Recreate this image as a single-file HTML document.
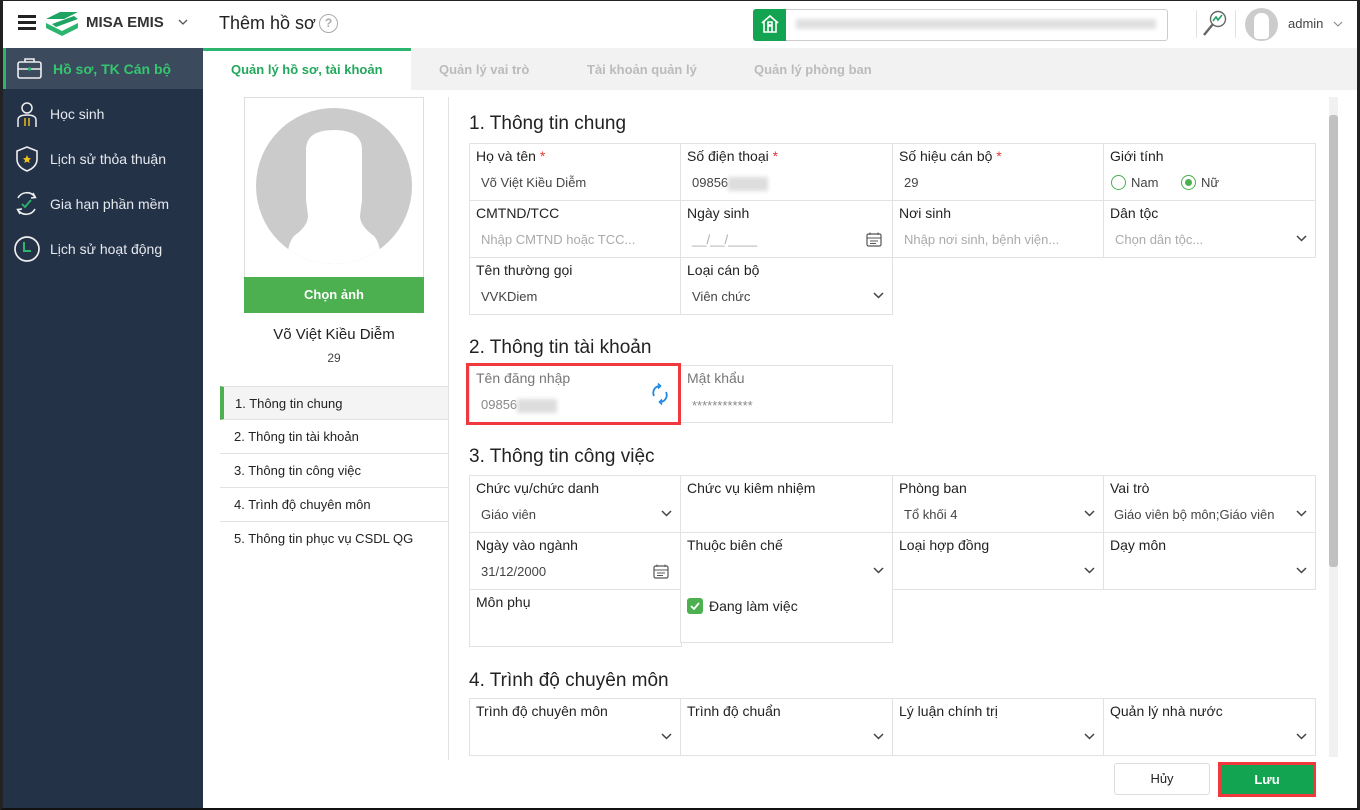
<!DOCTYPE html>
<html><head><meta charset="utf-8"><style>
*{margin:0;padding:0;box-sizing:border-box}
body{width:1360px;height:810px;overflow:hidden;background:#fff;font-family:"Liberation Sans","DejaVu Sans",sans-serif;position:relative;color:#222}
.a{position:absolute}
.c{position:absolute;border:1px solid #e2e2e2;background:#fff}
.l{position:absolute;left:6px;top:4px;font-size:14px;color:#222;white-space:nowrap}
.v{position:absolute;left:11px;top:31px;font-size:13px;color:#444;white-space:nowrap}
.p{color:#aaa}
.s{color:#e53935}
.ch{position:absolute;right:8px;top:34px}
.h{position:absolute;left:469px;font-size:19px;color:#222}
.side{position:absolute;left:18px;font-size:14px;color:#e6e9ee}
.nav{position:absolute;left:220px;width:228px;height:34px;border-bottom:1px solid #e2e2e2;font-size:13px;padding:9px 0 0 14px;color:#222}
.tab{position:absolute;top:62px;font-size:13px;color:#bbb;font-weight:bold}
.blur{display:inline-block;background:#ddd;filter:blur(2px);vertical-align:middle}
</style></head><body>
<div class="a" style="left:0;top:0;width:1360px;height:810px;border:1px solid #222;border-left:3px solid #222;border-right:3px solid #222;border-bottom:2px solid #111;z-index:20;pointer-events:none"></div>

<div class="a" style="left:18px;top:15px;width:18px;height:3px;background:#222;box-shadow:0 6px 0 #222,0 12px 0 #222"></div>
<svg class="a" style="left:44px;top:10px" width="36" height="27" viewBox="0 0 36 27"><path d="M2 9 L16 2 L34 2 L20 9 Z" fill="#1ea362"/><path d="M8 14 L30 6 L34 9 L12 17 Z" fill="#1ea362"/><path d="M2 13 L18 21 L34 13 L34 18 L18 26 L2 18 Z" fill="#2bb56f"/></svg>
<div class="a" style="left:86px;top:14px;font-size:15px;font-weight:bold;color:#333">MISA EMIS</div>
<svg class="a" style="left:178px;top:19px" width="10" height="6"><path d="M1 1 L5 5 L9 1" stroke="#555" fill="none" stroke-width="1.3"/></svg>
<div class="a" style="left:219px;top:13px;font-size:18px;color:#222">Thêm hồ sơ</div>
<div class="a" style="left:319px;top:14px;width:19px;height:19px;border:1.5px solid #aaa;border-radius:50%;font-size:12px;color:#aaa;text-align:center;line-height:16px;font-weight:bold">?</div>
<div class="a" style="left:753px;top:9px;width:415px;height:32px;border:1px solid #ccc;border-radius:3px"></div>
<div class="a" style="left:753px;top:9px;width:33px;height:32px;background:#13a452;border-radius:3px 0 0 3px"></div>
<svg class="a" style="left:760px;top:14px" width="20" height="20" viewBox="0 0 20 20"><path d="M2 9 L10 2 L18 9 M4 8 V18 H16 V8 M8 18 V12 H12 V18 M8 8 H12 V11 H8Z" stroke="#fff" fill="none" stroke-width="1.6"/></svg>
<div class="a blur" style="left:796px;top:19px;width:360px;height:10px;background:#e0e0e0"></div>
<div class="a" style="left:1196px;top:10px;width:1px;height:28px;background:#e2e2e2"></div>
<svg class="a" style="left:1201px;top:8px" width="28" height="30" viewBox="0 0 28 30"><circle cx="17" cy="11" r="7.5" stroke="#666" fill="none" stroke-width="1.4"/><path d="M12 16 L3 27" stroke="#666" stroke-width="2.4"/><path d="M12 13 L15 9 L17 12 L21 7" stroke="#1ea362" fill="none" stroke-width="1.6"/></svg>
<div class="a" style="left:1235px;top:10px;width:1px;height:28px;background:#e2e2e2"></div>
<div class="a" style="left:1245px;top:8px;width:33px;height:33px;border-radius:50%;background:#ccc;overflow:hidden"><div class="a" style="left:9px;top:5px;width:15px;height:26px;border-radius:7px 7px 4px 4px;background:#fff"></div></div>
<div class="a" style="left:1288px;top:16px;font-size:13px;color:#444">admin</div>
<svg class="a" style="left:1333px;top:21px" width="10" height="6"><path d="M1 1 L5 5 L9 1" stroke="#888" fill="none" stroke-width="1.1"/></svg>

<div class="a" style="left:0;top:48px;width:203px;height:762px;background:#243248"></div>
<div class="a" style="left:3px;top:48px;width:200px;height:41px;background:#3c4a5e;border-left:3px solid #2bb56f"></div>
<svg class="a" style="left:16px;top:57px" width="27" height="23" viewBox="0 0 27 23"><rect x="2" y="5" width="23" height="16" rx="2" stroke="#eee" fill="none" stroke-width="1.6"/><path d="M9 5 V2 H18 V5 M2 12 H25" stroke="#eee" fill="none" stroke-width="1.6"/><circle cx="13.5" cy="12" r="1.7" fill="#2bb56f"/></svg>
<div class="a" style="left:53px;top:61px;font-size:14px;color:#34c76e;font-weight:bold">Hồ sơ, TK Cán bộ</div>
<svg class="a" style="left:16px;top:101px" width="22" height="27" viewBox="0 0 22 27"><circle cx="11" cy="7" r="5" stroke="#eee" fill="none" stroke-width="1.5"/><path d="M2 26 V19 Q2 14 11 14 Q20 14 20 19 V26" stroke="#eee" fill="none" stroke-width="1.5"/><path d="M9 17 V25 M13 17 V25" stroke="#e0b021" stroke-width="1.6"/></svg>
<div class="side" style="left:50px;top:106px">Học sinh</div>
<svg class="a" style="left:15px;top:145px" width="24" height="28" viewBox="0 0 24 28"><path d="M12 2 L22 6 V14 Q22 22 12 26 Q2 22 2 14 V6 Z" stroke="#eee" fill="none" stroke-width="1.6"/><path d="M12 10 L13.3 13 L16 13.3 L14 15.2 L14.6 18 L12 16.6 L9.4 18 L10 15.2 L8 13.3 L10.7 13Z" fill="#f3c219"/></svg>
<div class="side" style="left:50px;top:151px">Lịch sử thỏa thuận</div>
<svg class="a" style="left:13px;top:190px" width="27" height="27" viewBox="0 0 27 27"><path d="M5 8 A10 10 0 0 1 22 7 M22 19 A10 10 0 0 1 5 20" stroke="#eee" fill="none" stroke-width="1.6"/><path d="M20 3 L22.5 7.5 L18 8 M7 24 L4.5 19.5 L9 19" stroke="#eee" fill="none" stroke-width="1.5"/><path d="M9 14 L12 17 L18 10" stroke="#2bb56f" fill="none" stroke-width="1.8"/></svg>
<div class="side" style="left:50px;top:196px">Gia hạn phần mềm</div>
<svg class="a" style="left:13px;top:235px" width="28" height="28" viewBox="0 0 28 28"><circle cx="14" cy="14" r="12" stroke="#eee" fill="none" stroke-width="1.7"/><path d="M11 7 V16 H18" stroke="#2bb56f" fill="none" stroke-width="2"/></svg>
<div class="side" style="left:50px;top:241px">Lịch sử hoạt động</div>

<div class="a" style="left:203px;top:48px;width:1157px;height:42px;background:#f2f2f2"></div>
<div class="a" style="left:203px;top:48px;width:208px;height:42px;background:#fff;border-top:3px solid #2bb56f"></div>
<div class="tab" style="left:231px;color:#22a85b">Quản lý hồ sơ, tài khoản</div>
<div class="tab" style="left:439px">Quản lý vai trò</div>
<div class="tab" style="left:587px">Tài khoản quản lý</div>
<div class="tab" style="left:754px">Quản lý phòng ban</div>

<div class="a" style="left:244px;top:97px;width:180px;height:216px;border:1px solid #ddd"></div>
<div class="a" style="left:256px;top:108px;width:156px;height:156px;border-radius:50%;background:#cbcbcb;overflow:hidden">
 <svg class="a" style="left:0;top:0" width="156" height="156" viewBox="0 0 156 156"><path d="M50 92 L50 42 Q50 22 78 22 Q106 22 106 42 L106 92 L104 108 Q104 118 118 128 Q125 136 125 156 L31 156 Q31 136 38 128 Q52 118 52 108 Z" fill="#fff"/></svg>
</div>
<div class="a" style="left:244px;top:277px;width:180px;height:36px;background:#4caf50;color:#fff;font-size:13px;font-weight:bold;text-align:center;line-height:36px">Chọn ảnh</div>
<div class="a" style="left:220px;top:326px;width:228px;text-align:center;font-size:15px;color:#222">Võ Việt Kiều Diễm</div>
<div class="a" style="left:220px;top:351px;width:228px;text-align:center;font-size:12px;color:#444">29</div>
<div class="nav" style="top:386px;background:#f4f4f4;border-top:1px solid #e2e2e2;border-left:4px solid #4caf50;padding-left:11px">1. Thông tin chung</div>
<div class="nav" style="top:420px">2. Thông tin tài khoản</div>
<div class="nav" style="top:454px">3. Thông tin công việc</div>
<div class="nav" style="top:488px">4. Trình độ chuyên môn</div>
<div class="nav" style="top:522px;border-bottom:none">5. Thông tin phục vụ CSDL QG</div>
<div class="a" style="left:448px;top:97px;width:1px;height:663px;background:#e2e2e2"></div>

<div class="h" style="top:113px">1. Thông tin chung</div>
<div class="c" style="left:469px;top:143px;width:212px;height:58px"><div class="l">Họ và tên <span class="s">*</span></div><div class="v">Võ Việt Kiều Diễm</div></div>
<div class="c" style="left:680px;top:143px;width:213px;height:58px"><div class="l">Số điện thoại <span class="s">*</span></div><div class="v">09856<span class="blur" style="width:40px;height:14px"></span></div></div>
<div class="c" style="left:892px;top:143px;width:212px;height:58px"><div class="l">Số hiệu cán bộ <span class="s">*</span></div><div class="v">29</div></div>
<div class="c" style="left:1103px;top:143px;width:213px;height:58px"><div class="l">Giới tính</div>
 <div class="a" style="left:7px;top:31px;width:15px;height:15px;border:1.5px solid #4caf50;border-radius:50%"></div><div class="a" style="left:27px;top:31px;font-size:13px;color:#444">Nam</div>
 <div class="a" style="left:77px;top:31px;width:15px;height:15px;border:1.5px solid #4caf50;border-radius:50%"><div class="a" style="left:2.5px;top:2.5px;width:7px;height:7px;border-radius:50%;background:#4caf50"></div></div><div class="a" style="left:97px;top:31px;font-size:13px;color:#444">Nữ</div></div>
<div class="c" style="left:469px;top:200px;width:212px;height:58px"><div class="l">CMTND/TCC</div><div class="v p">Nhập CMTND hoặc TCC...</div></div>
<div class="c" style="left:680px;top:200px;width:213px;height:58px"><div class="l">Ngày sinh</div><div class="v p">__/__/____</div>
 <svg class="a" style="right:10px;top:31px" width="16" height="15"><rect x="1" y="2" width="14" height="12" rx="1.5" stroke="#555" fill="none" stroke-width="1.2"/><path d="M1 6 H15 M4 0.5 V3 M12 0.5 V3 M4 9 H12 M4 11.5 H10" stroke="#555" stroke-width="1"/></svg></div>
<div class="c" style="left:892px;top:200px;width:212px;height:58px"><div class="l">Nơi sinh</div><div class="v p">Nhập nơi sinh, bệnh viện...</div></div>
<div class="c" style="left:1103px;top:200px;width:213px;height:58px"><div class="l">Dân tộc</div><div class="v p">Chọn dân tộc...</div><svg class="ch" width="11" height="7"><path d="M1 1 L5.5 5.5 L10 1" stroke="#444" fill="none" stroke-width="1.5"/></svg></div>
<div class="c" style="left:469px;top:257px;width:212px;height:58px"><div class="l">Tên thường gọi</div><div class="v">VVKDiem</div></div>
<div class="c" style="left:680px;top:257px;width:213px;height:58px"><div class="l">Loại cán bộ</div><div class="v">Viên chức</div><svg class="ch" width="11" height="7"><path d="M1 1 L5.5 5.5 L10 1" stroke="#444" fill="none" stroke-width="1.5"/></svg></div>

<div class="h" style="top:337px">2. Thông tin tài khoản</div>
<div class="c" style="left:469px;top:365px;width:212px;height:58px"><div class="l" style="color:#777">Tên đăng nhập</div><div class="v" style="color:#888">09856<span class="blur" style="width:40px;height:14px"></span></div>
 <svg class="a" style="left:180px;top:17px" width="20" height="22" viewBox="0 0 20 22"><path d="M4 13 A7 7 0 0 1 9 3 M16 9 A7 7 0 0 1 11 19" stroke="#1e88e5" fill="none" stroke-width="1.8"/><path d="M8 0.5 L10.5 3 L8 5.5 M12 16.5 L9.5 19 L12 21.5" stroke="#1e88e5" fill="none" stroke-width="1.6"/></svg></div>
<div class="c" style="left:680px;top:365px;width:213px;height:58px"><div class="l" style="color:#777">Mật khẩu</div><div class="v" style="color:#888;top:32px">************</div></div>
<div class="a" style="left:466px;top:363px;width:215px;height:62px;border:3px solid #f0393c"></div>

<div class="h" style="top:446px">3. Thông tin công việc</div>
<div class="c" style="left:469px;top:475px;width:212px;height:58px"><div class="l">Chức vụ/chức danh</div><div class="v">Giáo viên</div><svg class="ch" width="11" height="7"><path d="M1 1 L5.5 5.5 L10 1" stroke="#444" fill="none" stroke-width="1.5"/></svg></div>
<div class="c" style="left:680px;top:475px;width:213px;height:58px"><div class="l">Chức vụ kiêm nhiệm</div></div>
<div class="c" style="left:892px;top:475px;width:212px;height:58px"><div class="l">Phòng ban</div><div class="v">Tổ khối 4</div><svg class="ch" width="11" height="7"><path d="M1 1 L5.5 5.5 L10 1" stroke="#444" fill="none" stroke-width="1.5"/></svg></div>
<div class="c" style="left:1103px;top:475px;width:213px;height:58px"><div class="l">Vai trò</div><div class="v" style="left:10px">Giáo viên bộ môn;Giáo viên</div><svg class="ch" width="11" height="7"><path d="M1 1 L5.5 5.5 L10 1" stroke="#444" fill="none" stroke-width="1.5"/></svg></div>
<div class="c" style="left:469px;top:532px;width:212px;height:58px"><div class="l">Ngày vào ngành</div><div class="v">31/12/2000</div>
 <svg class="a" style="right:11px;top:31px" width="16" height="15"><rect x="1" y="2" width="14" height="12" rx="1.5" stroke="#555" fill="none" stroke-width="1.2"/><path d="M1 6 H15 M4 0.5 V3 M12 0.5 V3 M4 9 H12 M4 11.5 H10" stroke="#555" stroke-width="1"/></svg></div>
<div class="c" style="left:680px;top:532px;width:213px;height:58px"><div class="l">Thuộc biên chế</div><svg class="ch" width="11" height="7"><path d="M1 1 L5.5 5.5 L10 1" stroke="#444" fill="none" stroke-width="1.5"/></svg></div>
<div class="c" style="left:892px;top:532px;width:212px;height:58px"><div class="l">Loại hợp đồng</div><svg class="ch" width="11" height="7"><path d="M1 1 L5.5 5.5 L10 1" stroke="#444" fill="none" stroke-width="1.5"/></svg></div>
<div class="c" style="left:1103px;top:532px;width:213px;height:58px"><div class="l">Dạy môn</div><svg class="ch" width="11" height="7"><path d="M1 1 L5.5 5.5 L10 1" stroke="#444" fill="none" stroke-width="1.5"/></svg></div>
<div class="c" style="left:469px;top:589px;width:213px;height:58px"><div class="l">Môn phụ</div></div>
<div class="c" style="left:680px;top:589px;width:213px;height:54px;border-top:none">
 <div class="a" style="left:6px;top:9px;width:16px;height:16px;border-radius:3px;background:#4caf50"></div>
 <svg class="a" style="left:9px;top:13px" width="10" height="8"><path d="M1 4 L4 7 L9 1" stroke="#fff" fill="none" stroke-width="1.8"/></svg>
 <div class="a" style="left:28px;top:9px;font-size:14px;color:#222">Đang làm việc</div></div>

<div class="h" style="top:670px">4. Trình độ chuyên môn</div>
<div class="c" style="left:469px;top:698px;width:212px;height:58px"><div class="l">Trình độ chuyên môn</div><svg class="ch" width="11" height="7"><path d="M1 1 L5.5 5.5 L10 1" stroke="#444" fill="none" stroke-width="1.5"/></svg></div>
<div class="c" style="left:680px;top:698px;width:213px;height:58px"><div class="l">Trình độ chuẩn</div><svg class="ch" width="11" height="7"><path d="M1 1 L5.5 5.5 L10 1" stroke="#444" fill="none" stroke-width="1.5"/></svg></div>
<div class="c" style="left:892px;top:698px;width:212px;height:58px"><div class="l">Lý luận chính trị</div><svg class="ch" width="11" height="7"><path d="M1 1 L5.5 5.5 L10 1" stroke="#444" fill="none" stroke-width="1.5"/></svg></div>
<div class="c" style="left:1103px;top:698px;width:213px;height:58px"><div class="l">Quản lý nhà nước</div><svg class="ch" width="11" height="7"><path d="M1 1 L5.5 5.5 L10 1" stroke="#444" fill="none" stroke-width="1.5"/></svg></div>

<div class="a" style="left:1329px;top:97px;width:9px;height:660px;background:#f1f1f1"></div>
<div class="a" style="left:1329px;top:115px;width:9px;height:452px;background:#c1c1c1;border-radius:3px"></div>

<div class="a" style="left:449px;top:757px;width:908px;height:51px;background:#fff"></div>
<div class="a" style="left:1114px;top:763px;width:96px;height:32px;border:1px solid #ddd;border-radius:3px;text-align:center;line-height:30px;font-size:13px;color:#222">Hủy</div>
<div class="a" style="left:1218px;top:762px;width:98px;height:35px;background:#13a452;border:3px solid #f0393c;text-align:center;line-height:29px;font-size:13px;color:#fff;font-weight:bold">Lưu</div>
</body></html>
